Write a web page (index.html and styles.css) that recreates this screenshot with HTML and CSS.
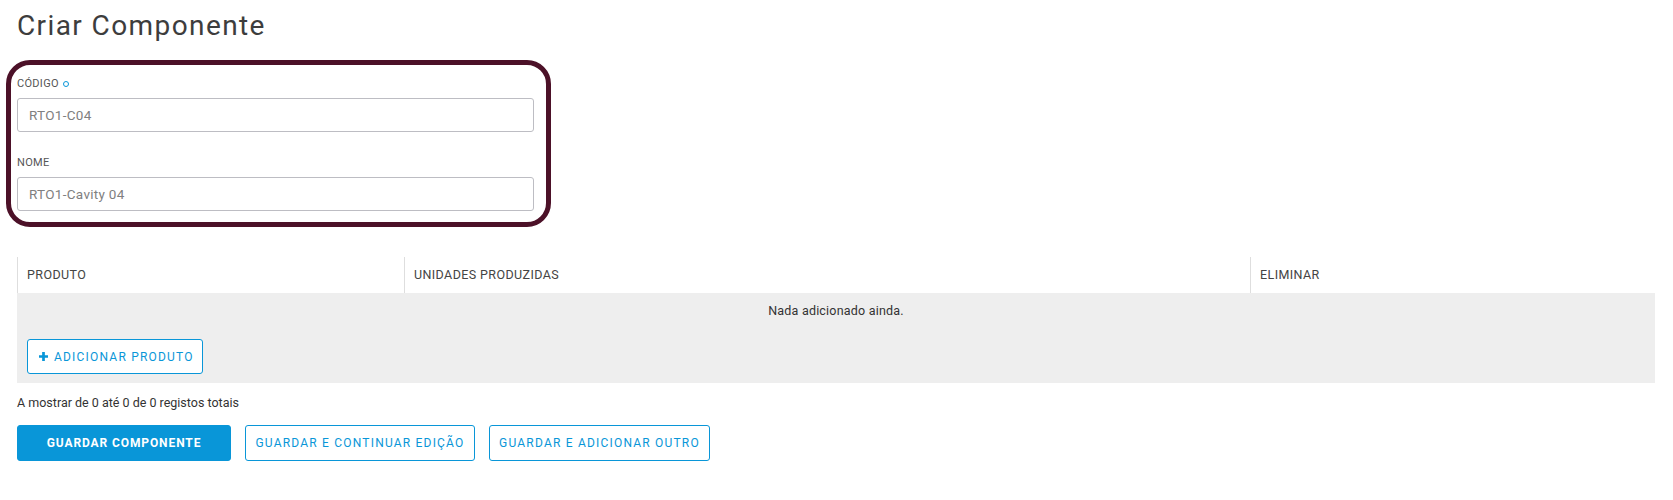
FILE: index.html
```html
<!DOCTYPE html>
<html lang="pt">
<head>
<meta charset="utf-8">
<title>Criar Componente</title>
<link rel="stylesheet" href="styles.css">
</head>
<body>
<div class="page">
  <h1 class="title">Criar Componente</h1>

  <div class="highlight">
    <div class="field">
      <label class="label">CÓDIGO <span class="req"></span></label>
      <div class="input">RTO1-C04</div>
    </div>
    <div class="field field-2">
      <label class="label">NOME</label>
      <div class="input">RTO1-Cavity 04</div>
    </div>
  </div>

  <div class="table">
    <div class="thead">
      <div class="th col1">PRODUTO</div>
      <div class="th col2">UNIDADES PRODUZIDAS</div>
      <div class="th col3">ELIMINAR</div>
    </div>
    <div class="empty">Nada adicionado ainda.</div>
    <div class="tfoot">
      <button class="btn-add"><svg class="plus" viewBox="0 0 10 10" width="9" height="9"><path d="M3.5 0h3v3.5H10v3H6.5V10h-3V6.5H0v-3h3.5z" fill="#0996d8"/></svg>ADICIONAR PRODUTO</button>
    </div>
  </div>

  <div class="count">A mostrar de 0 até 0 de 0 registos totais</div>

  <div class="actions">
    <button class="btn primary b1">GUARDAR COMPONENTE</button>
    <button class="btn outline b2">GUARDAR E CONTINUAR EDIÇÃO</button>
    <button class="btn outline b3">GUARDAR E ADICIONAR OUTRO</button>
  </div>
</div>
</body>
</html>
```

FILE: styles.css
```css
* { box-sizing: border-box; }
html, body { margin: 0; padding: 0; background: #fff; }
body {
  font-family: Roboto, "Noto Sans", sans-serif;
  color: #333;
}
.page {
  padding: 0 18px 0 17px;
  width: 1673px;
}
.title {
  margin: 0;
  padding-top: 8px;
  font-size: 28px;
  line-height: 36px;
  font-weight: 400;
  letter-spacing: 1.4px;
  color: #3d3d3d;
}
.highlight {
  margin-top: 16px;
  margin-left: -11px;
  width: 545px;
  height: 167px;
  border: 5px solid #4c1128;
  border-radius: 24px;
  padding: 12px 12px 0 6px;
}
.field { display: flex; flex-direction: column; }
.field-2 { margin-top: 24px; }
.label {
  font-size: 11px;
  line-height: 14px;
  color: #555;
  letter-spacing: 0.3px;
  display: flex;
  align-items: center;
  gap: 4px;
  height: 14px;
}
.req {
  display: inline-block;
  width: 6px;
  height: 6px;
  border: 1.8px solid #0996d8;
  border-radius: 50%;
}
.input {
  margin-top: 7px;
  height: 34px;
  border: 1px solid #bdbdc3;
  border-radius: 3px;
  padding: 0 11px;
  font-size: 13.5px;
  line-height: 32px;
  color: #808080;
  letter-spacing: 0.3px;
}
.table {
  margin-top: 30px;
  width: 1638px;
}
.thead {
  display: flex;
  height: 36px;
  background: #fff;
}
.th {
  border-left: 1px solid #dedede;
  padding-left: 9px;
  font-size: 12.5px;
  line-height: 36px;
  color: #444;
  letter-spacing: 0.4px;
}
.col1 { width: 387px; }
.col2 { width: 846px; }
.col3 { flex: 1; }
.empty {
  background: #eeeeee;
  height: 35px;
  line-height: 35px;
  text-align: center;
  font-size: 12.5px;
  color: #333;
  letter-spacing: 0.2px;
}
.tfoot {
  background: #eeeeee;
  height: 55px;
  padding: 11px 10px 0;
}
button { font-family: inherit; cursor: pointer; }
.btn-add {
  height: 35px;
  width: 176px;
  background: #fff;
  border: 1px solid #0996d8;
  border-radius: 3px;
  color: #0996d8;
  font-size: 12px;
  letter-spacing: 1.2px;
  display: flex;
  align-items: center;
  padding: 0 0 0 11px;
  gap: 6px;
}
.plus { flex: none; }
.count {
  margin-top: 12px;
  font-size: 12.5px;
  line-height: 16px;
  color: #333;
}
.actions {
  margin-top: 14px;
  display: flex;
  gap: 14px;
}
.btn {
  height: 36px;
  border-radius: 3px;
  font-size: 12px;
  letter-spacing: 1.2px;
  padding: 0;
}
.primary {
  background: #0996d8;
  border: 1px solid #0996d8;
  color: #fff;
  font-weight: 700;
  letter-spacing: 0.9px;
}
.outline {
  background: #fff;
  border: 1px solid #0996d8;
  color: #0996d8;
}
.b1 { width: 214px; }
.b2 { width: 230px; }
.b3 { width: 221px; }
```
